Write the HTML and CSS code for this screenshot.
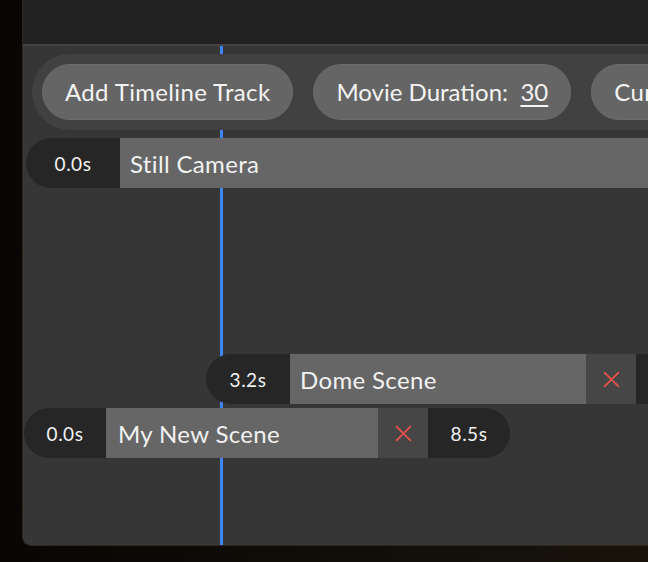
FILE: index.html
```html
<!DOCTYPE html>
<html>
<head>
<meta charset="utf-8">
<link rel="stylesheet" href="styles.css">
</head>
<body>
<div class="window">
  <div class="header"></div>
  <div class="timeline">
    <div class="playhead" style="left: 197px"></div>
    <div class="toolbar">
      <button class="btn">Add Timeline Track</button>
      <button class="btn btn-tight">Movie Duration:&nbsp; <span class="val">30</span></button>
      <button class="btn">Current Time: <span class="val">3.2</span></button>
    </div>
    <div class="track track-1" style="margin-left: 3px">
      <div class="time start" style="width: 94px">0.0s</div>
      <div class="label" style="width: 700px">Still Camera</div>
    </div>
    <div class="track track-2" style="margin-left: 183px">
      <div class="time start" style="width: 84px">3.2s</div>
      <div class="label" style="width: 296px">Dome Scene</div>
      <div class="del"><svg viewBox="0 0 16 16" width="17" height="17"><path d="M1 1L15 15M15 1L1 15"/></svg></div>
      <div class="time end" style="width: 82px">6.0s</div>
    </div>
    <div class="track track-3" style="margin-left: 1px">
      <div class="time start" style="width: 82px">0.0s</div>
      <div class="label label-pad" style="width: 272px">My New Scene</div>
      <div class="del"><svg viewBox="0 0 16 16" width="17" height="17"><path d="M1 1L15 15M15 1L1 15"/></svg></div>
      <div class="time end" style="width: 82px">8.5s</div>
    </div>
  </div>
</div>
</body>
</html>
```
FILE: styles.css
```css
html, body {
  margin: 0;
  padding: 0;
  height: 100%;
  overflow: hidden;
}
body {
  background: linear-gradient(to right, #070604 0%, #120f09 60%, #17130b 100%);
  font-family: "Lato", "Noto Sans", sans-serif;
  color: #f2f2f2;
}
.window {
  margin-left: 22px;
  width: 800px;
  height: 545px;
  border-left: 1px solid #30291a;
  border-bottom: 1px solid #30291a;
  border-bottom-left-radius: 9px;
  background: #363636;
  overflow: hidden;
  display: flex;
  flex-direction: column;
}
.header {
  height: 44px;
  flex: none;
  background: #212121;
  border-bottom: 2px solid #424242;
}
.timeline {
  position: relative;
  flex: 1;
  padding-top: 8px;
}
.playhead {
  position: absolute;
  top: 0;
  bottom: 0;
  width: 3px;
  background: #3d87f5;
  z-index: 0;
}
.toolbar {
  position: relative;
  z-index: 1;
  margin-left: 9px;
  height: 76px;
  box-sizing: border-box;
  padding: 10px;
  background: #414141;
  border-radius: 38px 0 0 38px;
  display: flex;
  gap: 20px;
  white-space: nowrap;
}
.btn {
  flex: none;
  height: 56px;
  box-sizing: border-box;
  padding: 0 22px;
  border-radius: 28px;
  border: 1px solid #6b6b6b;
  background: #656565;
  color: #f4f4f4;
  font-family: inherit;
  font-size: 24px;
  letter-spacing: 0.35px;
  line-height: 1;
}
.btn-tight {
  letter-spacing: 0;
}
.val {
  text-decoration: underline;
  text-decoration-thickness: 2px;
  text-underline-offset: 4px;
}
.track {
  position: relative;
  z-index: 1;
  display: flex;
  height: 50px;
  white-space: nowrap;
}
.track-1 { margin-top: 8px; }
.track-2 { margin-top: 166px; }
.track-3 { margin-top: 4px; }
.time {
  flex: none;
  display: flex;
  align-items: center;
  justify-content: center;
  background: #262626;
  font-size: 19px;
  letter-spacing: 0.5px;
}
.time.start { border-radius: 25px 0 0 25px; }
.time.end { border-radius: 0 25px 25px 0; }
.label {
  flex: none;
  display: flex;
  align-items: center;
  box-sizing: border-box;
  padding-left: 10px;
  background: #666666;
  font-size: 24px;
  letter-spacing: 0.35px;
}
.label-pad { padding-left: 12px; }
.del {
  flex: none;
  width: 50px;
  display: flex;
  align-items: center;
  justify-content: center;
  background: #464646;
}
.del svg {
  stroke: #e4524b;
  stroke-width: 1.8;
  fill: none;
}
```
